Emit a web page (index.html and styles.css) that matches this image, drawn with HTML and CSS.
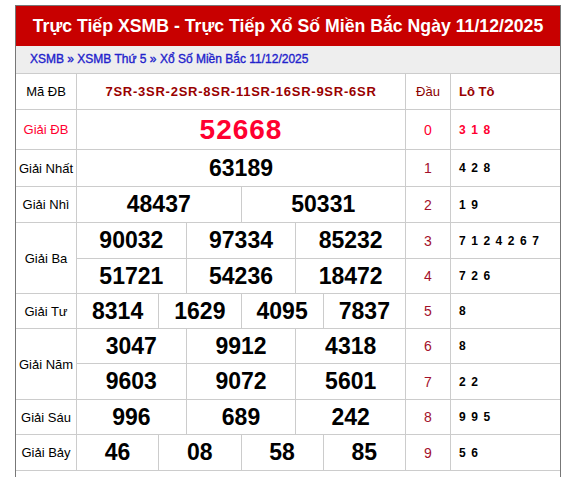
FILE: index.html
```html
<!DOCTYPE html>
<html lang="vi">
<head>
<meta charset="utf-8">
<title>XSMB 11/12/2025</title>
<link rel="stylesheet" href="styles.css">
</head>
<body>
<div class="box">
  <h1 class="title">Trực Tiếp XSMB - Trực Tiếp Xổ Số Miền Bắc Ngày 11/12/2025</h1>
  <div class="crumb"><a href="#">XSMB</a> » <a href="#">XSMB Thứ 5</a> » <a href="#">Xổ Số Miền Bắc 11/12/2025</a></div>
  <div class="board">
    <div class="c name">Mã ĐB</div>
    <div class="c prize code">7SR-3SR-2SR-8SR-11SR-16SR-9SR-6SR</div>
    <div class="c dau head">Đầu</div>
    <div class="c loto head">Lô Tô</div>

    <div class="c name red">Giải ĐB</div>
    <div class="c prize"><span class="db">52668</span></div>
    <div class="c dau red">0</div>
    <div class="c loto red">3 1 8</div>

    <div class="c name">Giải Nhất</div>
    <div class="c prize"><span class="n">63189</span></div>
    <div class="c dau">1</div>
    <div class="c loto">4 2 8</div>

    <div class="c name">Giải Nhì</div>
    <div class="c prize nums"><span>48437</span><span>50331</span></div>
    <div class="c dau">2</div>
    <div class="c loto">1 9</div>

    <div class="c name span2">Giải Ba</div>
    <div class="c prize nums"><span>90032</span><span>97334</span><span>85232</span></div>
    <div class="c dau">3</div>
    <div class="c loto">7 1 2 4 2 6 7</div>
    <div class="c prize nums"><span>51721</span><span>54236</span><span>18472</span></div>
    <div class="c dau">4</div>
    <div class="c loto">7 2 6</div>

    <div class="c name">Giải Tư</div>
    <div class="c prize nums"><span>8314</span><span>1629</span><span>4095</span><span>7837</span></div>
    <div class="c dau">5</div>
    <div class="c loto">8</div>

    <div class="c name span2">Giải Năm</div>
    <div class="c prize nums"><span>3047</span><span>9912</span><span>4318</span></div>
    <div class="c dau">6</div>
    <div class="c loto">8</div>
    <div class="c prize nums"><span>9603</span><span>9072</span><span>5601</span></div>
    <div class="c dau">7</div>
    <div class="c loto">2 2</div>

    <div class="c name">Giải Sáu</div>
    <div class="c prize nums"><span>996</span><span>689</span><span>242</span></div>
    <div class="c dau">8</div>
    <div class="c loto">9 9 5</div>

    <div class="c name">Giải Bảy</div>
    <div class="c prize nums"><span>46</span><span>08</span><span>58</span><span>85</span></div>
    <div class="c dau">9</div>
    <div class="c loto">5 6</div>
  </div>
</div>
</body>
</html>
```

FILE: styles.css
```css
html, body {
  margin: 0;
  padding: 0;
  background: #fff;
}
body {
  font-family: "Liberation Sans", Arial, sans-serif;
  color: #000;
}
.box {
  margin: 5px 0 0 15px;
  width: 544px;
  border: 1px solid #777;
  border-bottom: none;
  min-height: 480px;
}
.title {
  margin: 0;
  height: 40px;
  background: #c80000;
  color: #fff;
  font-size: 17.7px;
  font-weight: bold;
  line-height: 40px;
  text-align: center;
  white-space: nowrap;
}
.crumb {
  height: 27px;
  line-height: 27px;
  background: #eeeeee;
  border-bottom: 1px solid #ccc;
  padding-left: 14px;
  font-size: 12px;
  color: #2222cc;
  white-space: nowrap;
  -webkit-text-stroke: 0.35px #2222cc;
}
.crumb a {
  color: #2222cc;
  text-decoration: none;
}
.board {
  display: grid;
  grid-template-columns: 61px 329px 45px 109px;
  grid-template-rows: 36px 40px 37px 36px 36px 35px 35px 35px 36px 35px 36px;
}
.c {
  box-sizing: border-box;
  border-right: 1px solid #ccc;
  border-bottom: 1px solid #ccc;
  display: flex;
  align-items: center;
  font-size: 13px;
}
.name {
  justify-content: center;
  white-space: nowrap;
}
.span2 {
  grid-row: span 2;
}
.prize {
  justify-content: center;
}
.code {
  color: #990000;
  font-weight: bold;
  letter-spacing: 0.75px;
}
.dau {
  justify-content: center;
  color: #a3102a;
  font-size: 14px;
}
.dau.head {
  font-size: 13px;
  color: #8b0000;
}
.loto {
  border-right: none;
  padding-left: 8px;
  font-size: 12px;
  font-weight: bold;
  letter-spacing: 1.1px;
  white-space: pre;
}
.loto.head {
  font-size: 13px;
  color: #990000;
  letter-spacing: 0;
}
.red,
.dau.red,
.loto.red {
  color: #ff0030;
}
.db {
  color: #ff0030;
  font-size: 28px;
  font-weight: bold;
  letter-spacing: 1px;
}
.n {
  font-size: 23px;
  font-weight: bold;
}
.nums {
  display: flex;
  align-items: stretch;
  padding: 0;
}
.nums span {
  flex: 1 1 0;
  box-sizing: border-box;
  border-right: 1px solid #ccc;
  display: flex;
  align-items: center;
  justify-content: center;
  font-size: 23px;
  font-weight: bold;
}
.nums span:last-child {
  border-right: none;
}
```
